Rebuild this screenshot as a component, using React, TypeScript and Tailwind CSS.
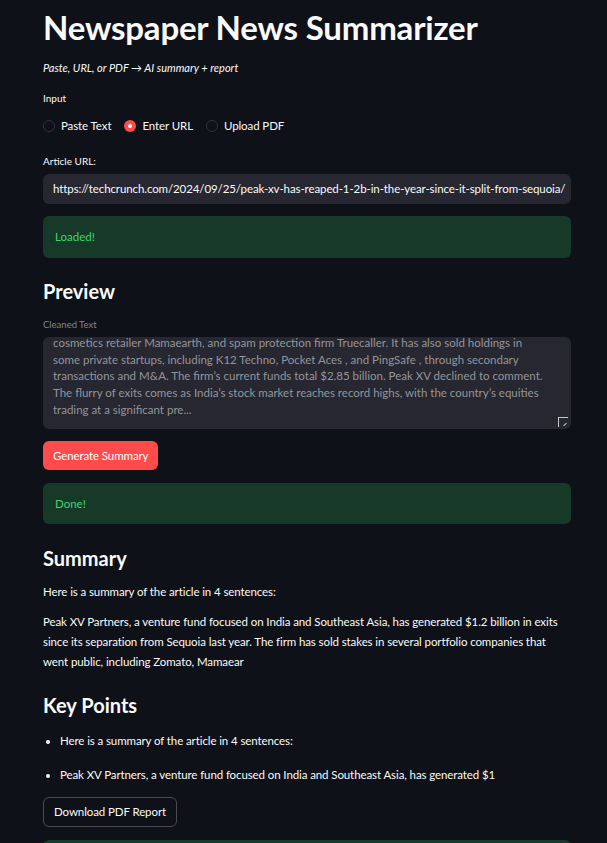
import React from 'react';

const font = { fontFamily: 'Lato, "Noto Sans", sans-serif' };

const Radio = ({ label, checked }: { label: string; checked?: boolean }) => (
  <label className="flex items-center gap-[6px] mr-[13px]">
    {checked ? (
      <span className="w-[12px] h-[12px] rounded-full bg-[#ff4b4b] flex items-center justify-center">
        <span className="w-[4px] h-[4px] rounded-full bg-white" />
      </span>
    ) : (
      <span className="w-[12px] h-[12px] rounded-full border border-[#31333f] bg-[#0e1117]" />
    )}
    <span className="text-[11.5px] tracking-[-0.1px] text-[#fafafa]">{label}</span>
  </label>
);

const Alert = ({ text, h = 'h-[42px]' }: { text: string; h?: string }) => (
  <div className={`rounded-[6px] bg-[#173928] px-[12px] ${h} flex items-center text-[11.5px] text-[#3dd56d]`}>
    {text}
  </div>
);

const previewLines = [
  'cosmetics retailer Mamaearth, and spam protection firm Truecaller. It has also sold holdings in',
  'some private startups, including K12 Techno, Pocket Aces , and PingSafe , through secondary',
  'transactions and M&A. The firm’s current funds total $2.85 billion. Peak XV declined to comment.',
  'The flurry of exits comes as India’s stock market reaches record highs, with the country’s equities',
  'trading at a significant pre...',
];

const summaryLines = [
  'Peak XV Partners, a venture fund focused on India and Southeast Asia, has generated $1.2 billion in exits',
  'since its separation from Sequoia last year. The firm has sold stakes in several portfolio companies that',
  'went public, including Zomato, Mamaear',
];

export default function App() {
  return (
    <div className="bg-[#0e1117] text-[#fafafa] overflow-hidden h-[843px]" style={font}>
      <div className="w-[528px] ml-[43px] flex flex-col">
        <h1 className="text-[33px] font-bold leading-[33px] pt-[11px] tracking-[-0.2px]">Newspaper News Summarizer</h1>
        <p className="italic text-[11px] leading-[16px] mt-[16px]">Paste, URL, or PDF → AI summary + report</p>

        <div className="text-[10px] leading-[14px] mt-[15px]">Input</div>
        <div className="flex items-center h-[16px] mt-[13px]">
          <Radio label="Paste Text" />
          <Radio label="Enter URL" checked />
          <Radio label="Upload PDF" />
        </div>

        <div className="text-[10px] leading-[14px] mt-[20px]">Article URL:</div>
        <div className="mt-[6px] h-[30px] rounded-[6px] bg-[#262730] flex items-center px-[10px] text-[11.5px] tracking-[-0.1px] whitespace-nowrap overflow-hidden">
          https://techcrunch.com/2024/09/25/peak-xv-has-reaped-1-2b-in-the-year-since-it-split-from-sequoia/
        </div>

        <div className="mt-[12px]">
          <Alert text="Loaded!" />
        </div>

        <h2 className="text-[20px] font-bold leading-[26px] mt-[20px]">Preview</h2>

        <div className="text-[9.5px] leading-[12px] text-[#808495] mt-[15px]">Cleaned Text</div>
        <div className="relative mt-[6px] h-[92px] rounded-[6px] bg-[#262730] overflow-hidden">
          <div className="px-[10px] -mt-[2px] text-[11.5px] leading-[16.7px] text-[#94959b] whitespace-nowrap">
            {previewLines.map((l) => (
              <div key={l}>{l}</div>
            ))}
          </div>
          <span className="absolute right-[3px] bottom-[2px] w-[10px] h-[10px] border-l border-t border-[#c8c8d0]" />
          <span className="absolute right-[4px] bottom-[4px] w-[4px] h-[1px] bg-[#c8c8d0] -rotate-45" />
        </div>

        <div className="mt-[12px]">
          <button className="h-[29px] px-[10px] rounded-[6px] bg-[#ff4b4b] text-white text-[11.5px] tracking-[-0.1px]">Generate Summary</button>
        </div>

        <div className="mt-[13px]">
          <Alert text="Done!" h="h-[41px]" />
        </div>

        <h2 className="text-[20px] font-bold leading-[26px] mt-[21px]">Summary</h2>
        <p className="text-[11.5px] tracking-[-0.1px] leading-[16px] mt-[13px]">Here is a summary of the article in 4 sentences:</p>
        <div className="text-[11.5px] tracking-[-0.1px] leading-[20px] mt-[12px] whitespace-nowrap">
          {summaryLines.map((l) => (
            <div key={l}>{l}</div>
          ))}
        </div>

        <h2 className="text-[20px] font-bold leading-[26px] mt-[20px]">Key Points</h2>
        <ul className="mt-[15px] flex flex-col gap-[18px] text-[11.5px] tracking-[-0.1px] leading-[16px] list-disc pl-[17px]">
          <li>Here is a summary of the article in 4 sentences:</li>
          <li>Peak XV Partners, a venture fund focused on India and Southeast Asia, has generated $1</li>
        </ul>

        <div className="mt-[14px]">
          <button className="h-[30px] px-[10px] rounded-[6px] border border-[#4a4c55] text-[11.5px] tracking-[-0.1px]">Download PDF Report</button>
        </div>

        <div className="mt-[13px] h-[42px] rounded-[6px] bg-[#173928]" />
      </div>
    </div>
  );
}
